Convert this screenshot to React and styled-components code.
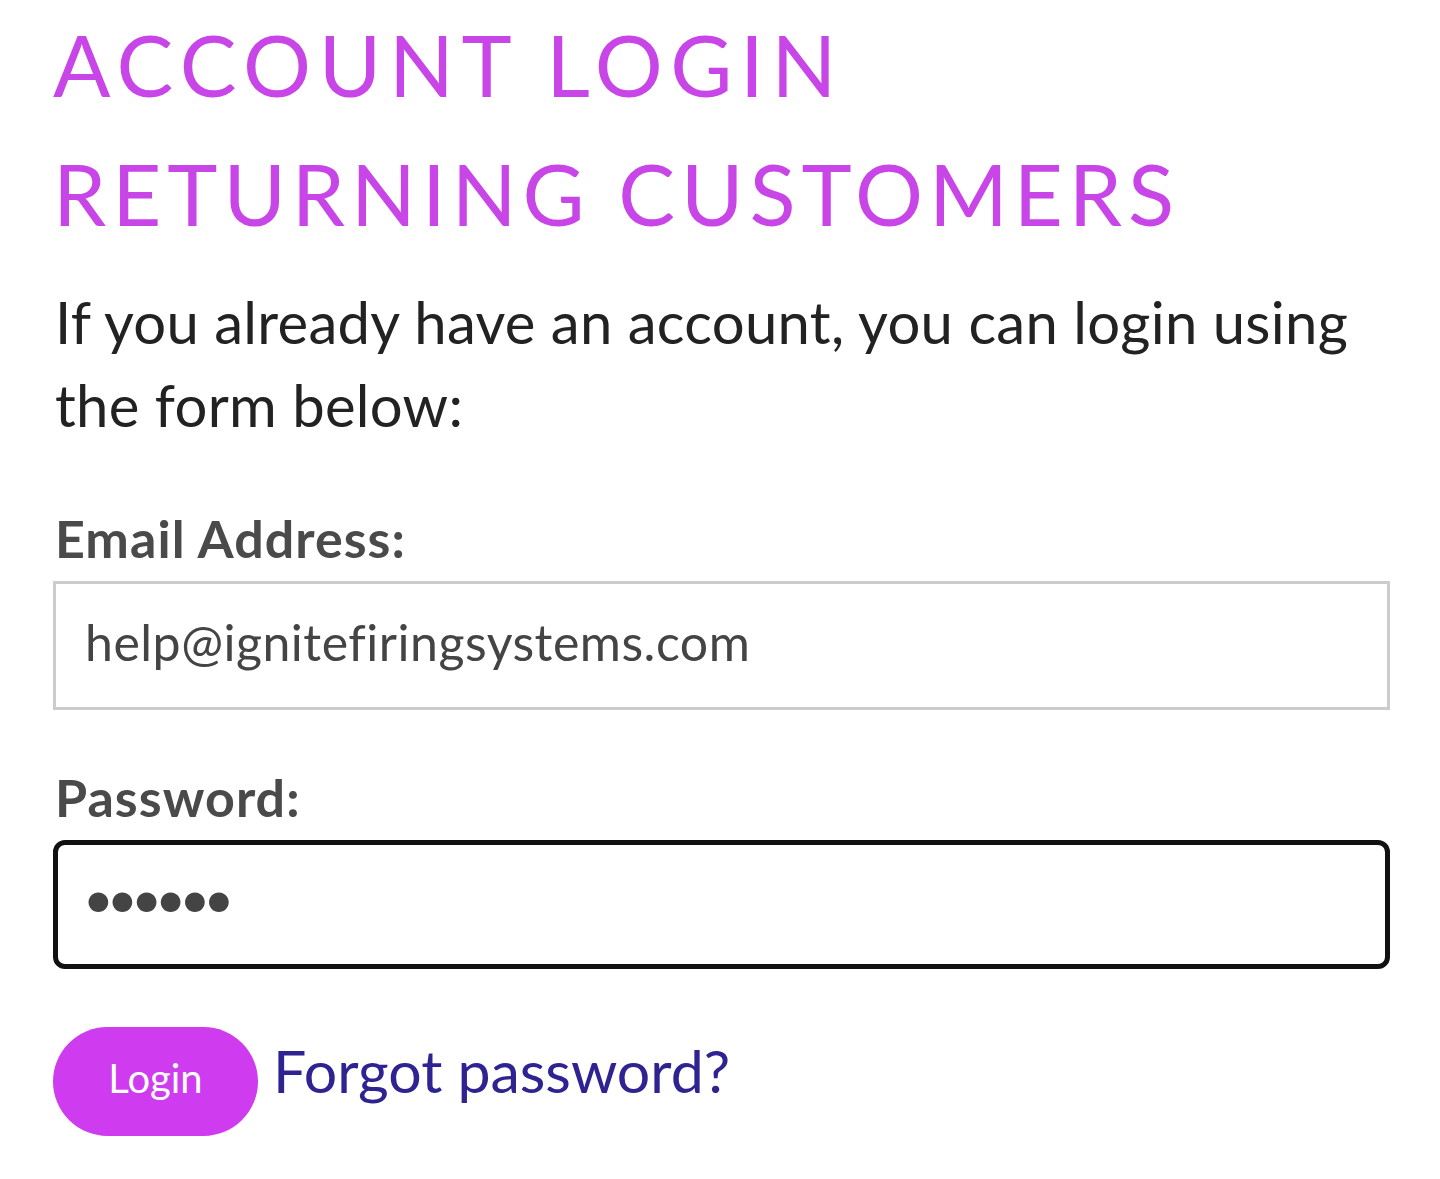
import React from "react";
import styled, { createGlobalStyle } from "styled-components";

const Global = createGlobalStyle`
  html, body { margin: 0; padding: 0; background: #ffffff; }
  body { font-family: Lato, "Noto Sans", sans-serif; }
  * { box-sizing: border-box; }
`;

const Page = styled.main`
  padding: 0 50px 40px 53px;
  width: 1440px;
`;

const Heading = styled.h1`
  margin: 0;
  font-family: Lato, sans-serif;
  font-weight: 400;
  font-size: 85px;
  line-height: 129px;
  color: #c846e8;
  text-transform: uppercase;
`;

const HeadingLine = styled.span`
  display: block;
  letter-spacing: ${(p) => p.$spacing || "0.07em"};
`;

const Intro = styled.p`
  margin: 22px 0 0 2px;
  font-size: 58px;
  line-height: 83px;
  font-weight: 400;
  letter-spacing: 0.005em;
  color: #222222;
  max-width: 1340px;
`;

const Form = styled.form`
  display: flex;
  flex-direction: column;
  margin-top: 62px;
`;

const Label = styled.label`
  display: block;
  margin: ${(p) => (p.$first ? "0" : "57px")} 0 13px 2px;
  font-size: 52px;
  line-height: 60px;
  font-weight: 700;
  letter-spacing: 0.02em;
  color: #4a4a4a;
`;

const Field = styled.input`
  display: block;
  width: 1337px;
  height: 129px;
  margin: 0;
  padding: 0 0 ${(p) => (p.$focused ? "14px" : "8px")} ${(p) => (p.$focused ? "25px" : "29px")};
  border: ${(p) => (p.$focused ? "5px solid #111111" : "3px solid #cccccc")};
  border-radius: ${(p) => (p.$focused ? "12px" : "0")};
  background: #ffffff;
  font-family: Lato, sans-serif;
  font-size: ${(p) => (p.$focused ? "53px" : "50px")};
  letter-spacing: ${(p) => (p.$focused ? "-0.125em" : "0.01em")};
  color: #444444;
  outline: none;
`;

const Actions = styled.div`
  display: flex;
  align-items: baseline;
  gap: 15px;
  margin-top: 58px;
`;

const LoginButton = styled.button`
  display: inline-flex;
  align-items: center;
  justify-content: center;
  width: 205px;
  height: 109px;
  padding: 0 0 8px;
  border: none;
  border-radius: 55px;
  background: #cf3bef;
  color: #ffffff;
  font-family: Lato, sans-serif;
  font-size: 40px;
  font-weight: 400;
  cursor: pointer;
`;

const ForgotLink = styled.a`
  font-size: 59px;
  line-height: 72px;
  color: #2e2390;
  text-decoration: none;
`;

export default function App() {
  return (
    <>
      <Global />
      <Page>
        <Heading>
          <HeadingLine $spacing="0.09em">Account Login</HeadingLine>
          <HeadingLine>Returning Customers</HeadingLine>
        </Heading>
        <Intro>
          If you already have an account, you can login using the form below:
        </Intro>
        <Form onSubmit={(e) => e.preventDefault()}>
          <Label $first htmlFor="email">Email Address:</Label>
          <Field
            id="email"
            type="text"
            defaultValue="help@ignitefiringsystems.com"
          />
          <Label htmlFor="password">Password:</Label>
          <Field
            id="password"
            type="password"
            $focused
            defaultValue="abcdef"
          />
          <Actions>
            <LoginButton type="submit">Login</LoginButton>
            <ForgotLink href="#">Forgot password?</ForgotLink>
          </Actions>
        </Form>
      </Page>
    </>
  );
}
